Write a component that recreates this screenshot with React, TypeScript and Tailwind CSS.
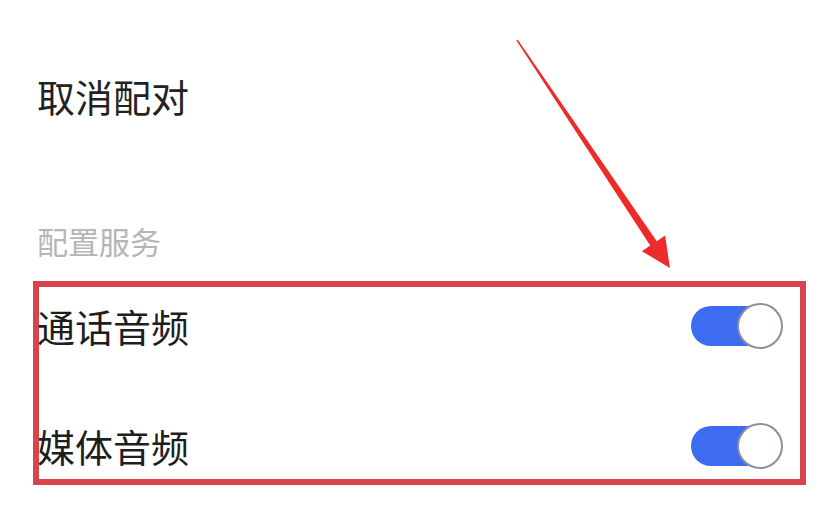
const font = { fontFamily: '"Noto Sans CJK SC", "Noto Sans", sans-serif' };

function Toggle() {
  return (
    <div className="relative w-[92px] h-[46px] shrink-0">
      <div className="absolute left-0 top-[3px] w-[86px] h-[40px] rounded-full bg-[#3e6cf0]" />
      <div className="absolute right-0 top-0 w-[46px] h-[46px] rounded-full bg-white border-[2px] border-[#8a8f9c]" />
    </div>
  );
}

function Row({ label }: { label: string }) {
  return (
    <div className="flex items-center justify-between h-[66px] pr-[17px]">
      <span className="text-[38px] leading-none text-[#1e1e1e] -ml-[2px]">{label}</span>
      <Toggle />
    </div>
  );
}

export default function App() {
  return (
    <div className="relative w-[825px] h-[529px] bg-white overflow-hidden" style={font}>
      <div className="pl-[37px] pt-[77px]">
        <div className="text-[38px] leading-none text-[#222]">取消配对</div>
        <div className="mt-[110px] text-[31px] leading-none text-[#b5b5b5]">配置服务</div>
      </div>
      <div className="ml-[33px] mt-[25px] w-[773px] h-[204px] border-[6px] border-[#d8444c] pt-[6px]">
        <Row label="通话音频" />
        <div className="h-[54px]" />
        <Row label="媒体音频" />
      </div>
      <svg className="absolute inset-0 pointer-events-none" width="825" height="529" viewBox="0 0 825 529">
        <polygon
          points="516.4,40.4 650.2,245.6 641.9,251.2 670,268 665.1,235.6 656.8,241.2 517.6,39.6"
          fill="#ee2b2b"
        />
      </svg>
    </div>
  );
}
